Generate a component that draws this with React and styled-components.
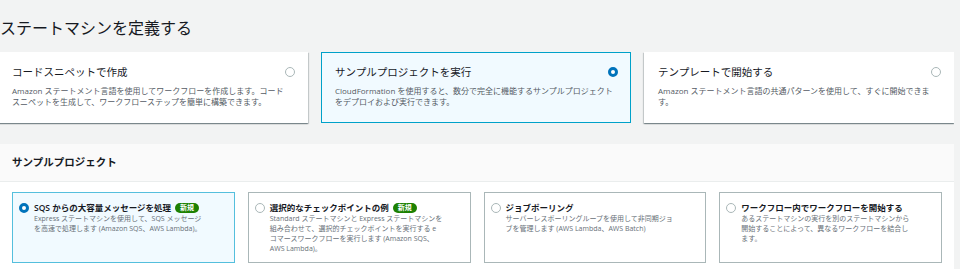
import React from "react";
import styled, { createGlobalStyle } from "styled-components";

const GlobalStyle = createGlobalStyle`
  html, body {
    margin: 0;
    padding: 0;
    background: #f2f3f3;
  }
  body {
    font-family: "Open Sans", "Noto Sans CJK JP", sans-serif;
    color: #16191f;
    overflow: hidden;
  }
`;

const Page = styled.div`
  width: 956px;
  margin-left: -2px;
  height: 269px;
  overflow: hidden;
`;

const Title = styled.h1`
  margin: 0;
  padding: 16px 0 0 2px;
  font-size: 16px;
  line-height: 24px;
  font-weight: 400;
  color: #16191f;
`;

const CardRow = styled.div`
  display: grid;
  grid-template-columns: repeat(3, 1fr);
  gap: 13px;
  margin-top: 12px;
`;

const Card = styled.div`
  background: ${(p) => (p.$selected ? "#f1faff" : "#fff")};
  border: 1px solid ${(p) => (p.$selected ? "#00a1c9" : "transparent")};
  box-shadow: ${(p) =>
    p.$selected
      ? "none"
      : "0 1px 1px 0 rgba(0,28,36,.3), 1px 1px 1px 0 rgba(0,28,36,.15), -1px 1px 1px 0 rgba(0,28,36,.15)"};
  padding: 11px 12px 15px 13px;
`;

const CardHead = styled.div`
  display: flex;
  align-items: center;
  justify-content: space-between;
`;

const CardTitle = styled.div`
  font-size: 10.5px;
  line-height: 16px;
`;

const CardDesc = styled.div`
  margin-top: 5px;
  font-size: 8px;
  line-height: 11px;
  color: #545b64;
  padding-right: 5px;
`;

const Radio = styled.span`
  box-sizing: border-box;
  flex: none;
  display: inline-block;
  width: ${(p) => p.$size}px;
  height: ${(p) => p.$size}px;
  border-radius: 50%;
  background: #fff;
  border: ${(p) => (p.$checked ? "3px solid #0073bb" : "1px solid #aab7b8")};
`;

const Panel = styled.div`
  margin-top: 21px;
  background: #fff;
  box-shadow: 0 1px 1px 0 rgba(0,28,36,.3), 1px 1px 1px 0 rgba(0,28,36,.15), -1px 1px 1px 0 rgba(0,28,36,.15);
`;

const PanelHeader = styled.div`
  background: #fafafa;
  border-bottom: 1px solid #eaeded;
  padding: 11px 14px 12px;
  font-size: 10.5px;
  line-height: 14px;
  font-weight: 700;
`;

const TileGrid = styled.div`
  display: grid;
  grid-template-columns: repeat(4, 1fr);
  gap: 13px;
  padding: 10px 12px 14px 14px;
`;

const Tile = styled.div`
  display: flex;
  gap: 5px;
  align-items: flex-start;
  background: ${(p) => (p.$selected ? "#f1faff" : "#fff")};
  border: 1px solid ${(p) => (p.$selected ? "#54bfdd" : "#aab7b8")};
  padding: 9px 26px 8px 6px;
`;

const TileRadioWrap = styled.div`
  height: 12px;
  display: flex;
  align-items: center;
`;

const TileBody = styled.div`
  min-width: 0;
`;

const TileTitle = styled.div`
  font-size: 8.5px;
  line-height: 12px;
  font-weight: 600;
  display: flex;
  align-items: center;
`;

const Badge = styled.span`
  margin-left: 4px;
  background: #1d8102;
  color: #fff;
  font-size: 7px;
  line-height: 10px;
  font-weight: 700;
  padding: 0 5px;
  border-radius: 6px;
`;

const TileDesc = styled.div`
  font-size: 7px;
  line-height: 10px;
  color: #687078;
`;

const options = [
  {
    title: "コードスニペットで作成",
    desc: "Amazon ステートメント言語を使用してワークフローを作成します。コードスニペットを生成して、ワークフローステップを簡単に構築できます。",
  },
  {
    title: "サンプルプロジェクトを実行",
    desc: "CloudFormation を使用すると、数分で完全に機能するサンプルプロジェクトをデプロイおよび実行できます。",
    selected: true,
  },
  {
    title: "テンプレートで開始する",
    desc: "Amazon ステートメント言語の共通パターンを使用して、すぐに開始できます。",
  },
];

const samples = [
  {
    title: "SQS からの大容量メッセージを処理",
    desc: "Express ステートマシンを使用して、SQS メッセージを高速で処理します (Amazon SQS、AWS Lambda)。",
    isNew: true,
    selected: true,
  },
  {
    title: "選択的なチェックポイントの例",
    desc: "Standard ステートマシンと Express ステートマシンを組み合わせて、選択的チェックポイントを実行する e コマースワークフローを実行します (Amazon SQS、AWS Lambda)。",
    isNew: true,
  },
  {
    title: "ジョブポーリング",
    desc: "サーバーレスポーリングループを使用して非同期ジョブを管理します (AWS Lambda、AWS Batch)",
  },
  {
    title: "ワークフロー内でワークフローを開始する",
    desc: "あるステートマシンの実行を別のステートマシンから開始することによって、異なるワークフローを結合します。",
  },
];

export default function App() {
  return (
    <Page>
      <GlobalStyle />
      <Title>ステートマシンを定義する</Title>
      <CardRow>
        {options.map((o) => (
          <Card key={o.title} $selected={o.selected}>
            <CardHead>
              <CardTitle>{o.title}</CardTitle>
              <Radio $size={10} $checked={o.selected} />
            </CardHead>
            <CardDesc>{o.desc}</CardDesc>
          </Card>
        ))}
      </CardRow>

      <Panel>
        <PanelHeader>サンプルプロジェクト</PanelHeader>
        <TileGrid>
          {samples.map((s) => (
            <Tile key={s.title} $selected={s.selected}>
              <TileRadioWrap>
                <Radio $size={10} $checked={s.selected} />
              </TileRadioWrap>
              <TileBody>
                <TileTitle>
                  {s.title}
                  {s.isNew && <Badge>新規</Badge>}
                </TileTitle>
                <TileDesc>{s.desc}</TileDesc>
              </TileBody>
            </Tile>
          ))}
        </TileGrid>
      </Panel>
    </Page>
  );
}
